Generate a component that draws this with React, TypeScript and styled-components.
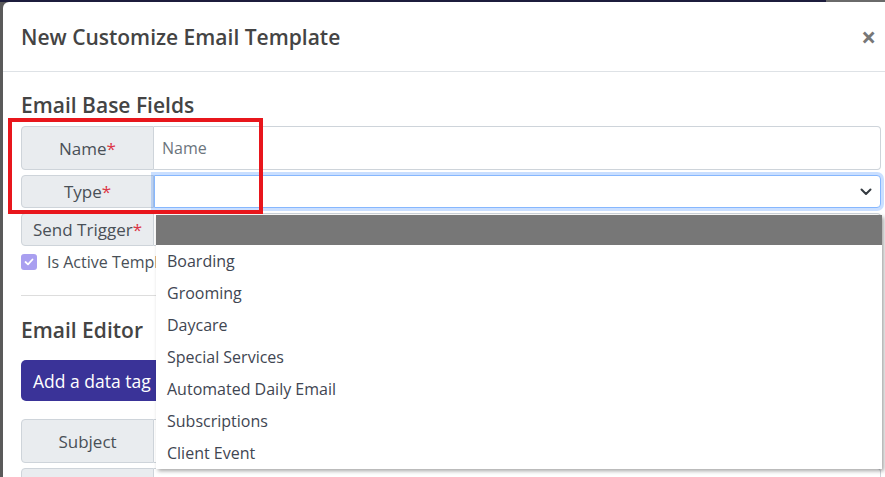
import React from "react";
import styled, { createGlobalStyle } from "styled-components";

const GlobalStyle = createGlobalStyle`
  html, body { margin: 0; padding: 0; }
  body {
    background: #5a5a5a;
    overflow: hidden;
    font-family: "Open Sans", "Noto Sans", "Liberation Sans", sans-serif;
    color: #495057;
  }
  * { box-sizing: border-box; }
`;

const Page = styled.div`
  position: relative;
  width: 885px;
  height: 477px;
  padding: 2px 0 0 3px;
  overflow: hidden;
  background:
    linear-gradient(to right, #1c1c3c 0 826px, #6a6a6a 826px) top / 100% 2px no-repeat,
    #5a5a5a;
`;

const Modal = styled.div`
  position: relative;
  width: 896px;
  height: 520px;
  background: #fff;
  border-top-left-radius: 6px;
`;

const Header = styled.div`
  display: flex;
  align-items: center;
  justify-content: space-between;
  height: 70px;
  padding: 0 23px 0 18px;
  border-bottom: 1px solid #dee2e6;
`;

const Title = styled.h5`
  margin: 0;
  font-size: 21px;
  font-weight: 600;
  color: #444;
`;

const Close = styled.span`
  font-size: 26px;
  font-weight: 700;
  color: #777;
  line-height: 1;
`;

const Body = styled.div`
  padding: 20px 18px;
`;

const SectionTitle = styled.h4<{ $mt?: number; $mb: number }>`
  margin: ${(p) => p.$mt ?? 0}px 0 ${(p) => p.$mb}px;
  font-size: 21px;
  font-weight: 600;
  color: #444;
  line-height: 27px;
`;

const Group = styled.div<{ $h: number }>`
  position: relative;
  display: flex;
  height: ${(p) => p.$h}px;
  margin-bottom: 5px;
`;

const Label = styled.div`
  flex: 0 0 133px;
  display: flex;
  align-items: center;
  justify-content: center;
  background: #e9ecef;
  border: 1px solid #ced4da;
  border-radius: 4px 0 0 4px;
  font-size: 17px;
  color: #495057;
`;

const Star = styled.span`
  color: #dc3545;
`;

const Input = styled.input`
  flex: 1;
  min-width: 0;
  border: 1px solid #ced4da;
  border-left: none;
  border-radius: 0 4px 4px 0;
  padding: 0 8px;
  font-family: inherit;
  font-size: 16px;
  color: #495057;
  outline: none;
  &::placeholder { color: #6c757d; }
`;

const SelectBox = styled.div`
  position: relative;
  flex: 1;
  display: flex;
  align-items: center;
  justify-content: flex-end;
  padding: 0 8px;
  border: 1px solid #86b7fe;
  border-radius: 0 4px 4px 0;
  box-shadow: 0 0 0 3px rgba(13, 110, 253, 0.22);
  background: #fff;
`;

const Dropdown = styled.ul`
  position: absolute;
  top: calc(100% + 8px);
  left: 1px;
  width: 726px;
  margin: 0;
  padding: 0;
  list-style: none;
  background: #fff;
  box-shadow: 2px 2px 4px rgba(0, 0, 0, 0.35);
  z-index: 5;
`;

const DropItem = styled.li<{ $blank?: boolean }>`
  height: ${(p) => (p.$blank ? 30 : 32)}px;
  line-height: 32px;
  padding: 0 11px;
  font-size: 16px;
  color: #3f4652;
  background: ${(p) => (p.$blank ? "#777" : "transparent")};
`;

const CheckRow = styled.div`
  display: flex;
  align-items: center;
  gap: 10px;
  height: 22px;
  margin-top: 5px;
  font-size: 16px;
  color: #495057;
`;

const CheckBox = styled.span`
  width: 16px;
  height: 16px;
  border-radius: 3px;
  background: #a99ff0;
  display: flex;
  align-items: center;
  justify-content: center;
`;

const Rule = styled.hr`
  border: none;
  border-top: 1px solid #ddd;
  margin: 22px 0 0;
`;

const PrimaryButton = styled.button`
  display: block;
  height: 41px;
  padding: 0 12px;
  border: none;
  border-radius: 5px;
  background: #3a3398;
  color: #fff;
  font-family: inherit;
  font-size: 17.5px;
  margin-bottom: 18px;
`;

const Highlight = styled.div`
  position: absolute;
  left: 5px;
  top: 116px;
  width: 255px;
  height: 96px;
  border: 4px solid #e8161c;
  z-index: 6;
`;

const items = [
  "Boarding",
  "Grooming",
  "Daycare",
  "Special Services",
  "Automated Daily Email",
  "Subscriptions",
  "Client Event",
];

export default function App() {
  return (
    <>
      <GlobalStyle />
      <Page>
        <Modal>
          <Header>
            <Title>New Customize Email Template</Title>
            <Close>×</Close>
          </Header>
          <Body>
            <SectionTitle $mb={7}>Email Base Fields</SectionTitle>
            <Group $h={44}>
              <Label>
                Name<Star>*</Star>
              </Label>
              <Input placeholder="Name" />
            </Group>
            <Group $h={33}>
              <Label>
                Type<Star>*</Star>
              </Label>
              <SelectBox>
                <svg width="12" height="8" viewBox="0 0 12 8">
                  <path d="M1.5 1.5 L6 6 L10.5 1.5" fill="none" stroke="#343a40" strokeWidth="2" strokeLinecap="round" strokeLinejoin="round" />
                </svg>
                <Dropdown>
                  <DropItem $blank />
                  {items.map((t) => (
                    <DropItem key={t}>{t}</DropItem>
                  ))}
                </Dropdown>
              </SelectBox>
            </Group>
            <Group $h={33}>
              <Label>
                Send Trigger<Star>*</Star>
              </Label>
              <Input />
            </Group>
            <CheckRow>
              <CheckBox>
                <svg width="10" height="8" viewBox="0 0 10 8">
                  <path d="M1.5 4 L4 6.3 L8.5 1.5" fill="none" stroke="#fff" strokeWidth="1.8" strokeLinecap="round" strokeLinejoin="round" />
                </svg>
              </CheckBox>
              Is Active Template
            </CheckRow>
            <Rule />
            <SectionTitle $mt={21} $mb={16}>Email Editor</SectionTitle>
            <PrimaryButton>Add a data tag</PrimaryButton>
            <Group $h={44}>
              <Label>Subject</Label>
              <Input />
            </Group>
            <Group $h={44}>
              <Label>Body</Label>
              <Input />
            </Group>
          </Body>
          <Highlight />
        </Modal>
      </Page>
    </>
  );
}
